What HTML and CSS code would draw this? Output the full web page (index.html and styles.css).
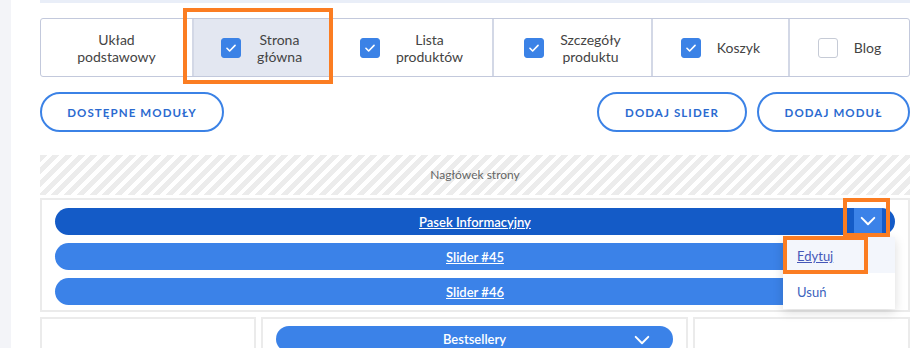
FILE: index.html
```html
<!DOCTYPE html>
<html lang="pl">

<head>
  <meta charset="UTF-8" />
  <title>Układ strony</title>
  <link rel="stylesheet" href="styles.css">
</head>

<body>
  <div class="page">
    <div class="topbar"></div>

    <div class="tabs">
      <div class="tab">
        <span class="tab-label">Układ<br>podstawowy</span>
      </div>
      <div class="tab active">
        <span class="check on"><svg viewBox="0 0 20 20"><path d="M5.5 10.3l3 3 6-6.2" /></svg></span>
        <span class="tab-label">Strona<br>główna</span>
      </div>
      <div class="tab">
        <span class="check on"><svg viewBox="0 0 20 20"><path d="M5.5 10.3l3 3 6-6.2" /></svg></span>
        <span class="tab-label">Lista<br>produktów</span>
      </div>
      <div class="tab">
        <span class="check on"><svg viewBox="0 0 20 20"><path d="M5.5 10.3l3 3 6-6.2" /></svg></span>
        <span class="tab-label">Szczegóły<br>produktu</span>
      </div>
      <div class="tab">
        <span class="check on"><svg viewBox="0 0 20 20"><path d="M5.5 10.3l3 3 6-6.2" /></svg></span>
        <span class="tab-label">Koszyk</span>
      </div>
      <div class="tab">
        <span class="check"></span>
        <span class="tab-label">Blog</span>
      </div>
    </div>

    <div class="actions">
      <button class="pill wide">DOSTĘPNE MODUŁY</button>
      <div class="actions-right">
        <button class="pill">DODAJ SLIDER</button>
        <button class="pill">DODAJ MODUŁ</button>
      </div>
    </div>

    <div class="header-zone">Nagłówek strony</div>

    <div class="zone">
      <div class="bar dark">
        <a href="#">Pasek Informacyjny</a>
        <span class="toggle"><svg viewBox="0 0 20 12"><path d="M3 2l7 7 7-7" /></svg></span>
      </div>
      <div class="bar"><a href="#">Slider #45</a></div>
      <div class="bar"><a href="#">Slider #46</a></div>

      <div class="menu">
        <a href="#" class="menu-item hover">Edytuj</a>
        <span class="menu-item">Usuń</span>
      </div>
    </div>

    <div class="columns">
      <div class="col"></div>
      <div class="col">
        <div class="bar short">
          <span>Bestsellery</span>
          <span class="chev"><svg viewBox="0 0 20 12"><path d="M3 2l7 7 7-7" /></svg></span>
        </div>
      </div>
      <div class="col"></div>
    </div>

    <!-- podświetlenia instrukcji -->
    <div class="mark mark-tab"></div>
    <div class="mark mark-toggle"></div>
    <div class="mark mark-edit"></div>
  </div>
</body>

</html>
```

FILE: styles.css
```css
body {
  margin: 0;
  background: #f3f4f8;
  font-family: Lato, 'Noto Sans', sans-serif;
  color: #444;
  overflow: hidden;
}

.page {
  position: relative;
  margin-left: 11px;
  height: 348px;
  padding: 0 10px 0 29px;
  background: #fff;
  overflow: hidden;
}

.topbar {
  height: 3px;
  background: #e9eef8;
}

.tabs {
  display: grid;
  grid-template-columns: 151px 137px 163px 159px 137px 1fr;
  height: 59px;
  margin-top: 15px;
  border: 1px solid #c3c9dc;
  border-radius: 3px;
  box-sizing: border-box;
}

.tab {
  display: flex;
  align-items: center;
  justify-content: center;
  gap: 16px;
  border-left: 2px solid #d3d8e6;
  font-size: 14px;
  line-height: 17px;
  text-align: center;
  color: #444;
}

.tab:first-child {
  border-left: none;
}

.tab.active {
  background: #e3e7f1;
}

.check {
  width: 20px;
  height: 20px;
  border-radius: 3px;
  border: 1px solid #c6cbd6;
  box-sizing: border-box;
  background: #fff;
  flex: none;
}

.check.on {
  background: #3b82e6;
  border-color: #3b82e6;
}

.check svg {
  display: block;
  width: 18px;
  height: 18px;
  fill: none;
  stroke: #fff;
  stroke-width: 1.8;
  stroke-linecap: round;
  stroke-linejoin: round;
}

.actions {
  display: flex;
  justify-content: space-between;
  margin-top: 15px;
}

.actions-right {
  display: flex;
  gap: 10px;
}

.pill {
  height: 40px;
  width: 150px;
  border: 2px solid #3b82e6;
  border-radius: 20px;
  background: #fff;
  color: #2b6ad0;
  font-family: Lato, 'Noto Sans', sans-serif;
  font-size: 11.5px;
  font-weight: 700;
  letter-spacing: 1.1px;
}

.pill.wide {
  width: 184px;
}

.actions-right .pill:last-child {
  width: 153px;
}

.header-zone {
  height: 40px;
  margin-top: 23px;
  line-height: 40px;
  text-align: center;
  font-size: 12px;
  color: #666;
  background: repeating-linear-gradient(135deg, #ececec 0 5px, #fff 5px 9px);
}

.zone {
  position: relative;
  margin-top: 3px;
  padding: 8px 13px 5px;
  border: 2px solid #ebebeb;
  display: flex;
  flex-direction: column;
  gap: 8px;
}

.bar {
  position: relative;
  height: 27px;
  border-radius: 14px;
  background: #3b82e8;
  display: flex;
  align-items: center;
  justify-content: center;
  font-size: 13px;
  font-weight: 600;
  color: #fff;
}

.bar.dark {
  background: #145bc7;
}

.bar a {
  color: #fff;
}

.toggle {
  position: absolute;
  right: 13px;
  top: 0;
  width: 28px;
  height: 27px;
  background: #3b82e8;
  display: flex;
  align-items: center;
  justify-content: center;
}

.toggle svg,
.chev svg {
  width: 18px;
  height: 11px;
  fill: none;
  stroke: #fff;
  stroke-width: 2.2;
  stroke-linecap: round;
  stroke-linejoin: round;
}

.menu {
  position: absolute;
  left: 741px;
  top: 37px;
  width: 112px;
  background: #fff;
  box-shadow: 0 3px 10px rgba(0, 0, 0, 0.15);
  display: flex;
  flex-direction: column;
}

.menu-item {
  height: 36px;
  line-height: 38px;
  padding-left: 14px;
  font-size: 13px;
  color: #3a62bd;
}

.menu-item.hover {
  background: #f3f6fc;
  color: #4658b8;
}

.columns {
  display: grid;
  grid-template-columns: 216px 427px 1fr;
  gap: 5px;
  margin-top: 5px;
}

.col {
  height: 40px;
  border: 2px solid #ebebeb;
  border-bottom: none;
  padding: 7px 13px 0;
}

.bar.short {
  height: 26px;
  border-radius: 13px;
}

.chev {
  position: absolute;
  right: 22px;
  top: 7px;
}

.mark {
  position: absolute;
  border: 4px solid #fb7d22;
  box-sizing: border-box;
}

.mark-tab {
  left: 172px;
  top: 8px;
  width: 150px;
  height: 76px;
}

.mark-toggle {
  left: 832px;
  top: 198px;
  width: 47px;
  height: 39px;
}

.mark-edit {
  left: 772px;
  top: 236px;
  width: 85px;
  height: 38px;
}
```
